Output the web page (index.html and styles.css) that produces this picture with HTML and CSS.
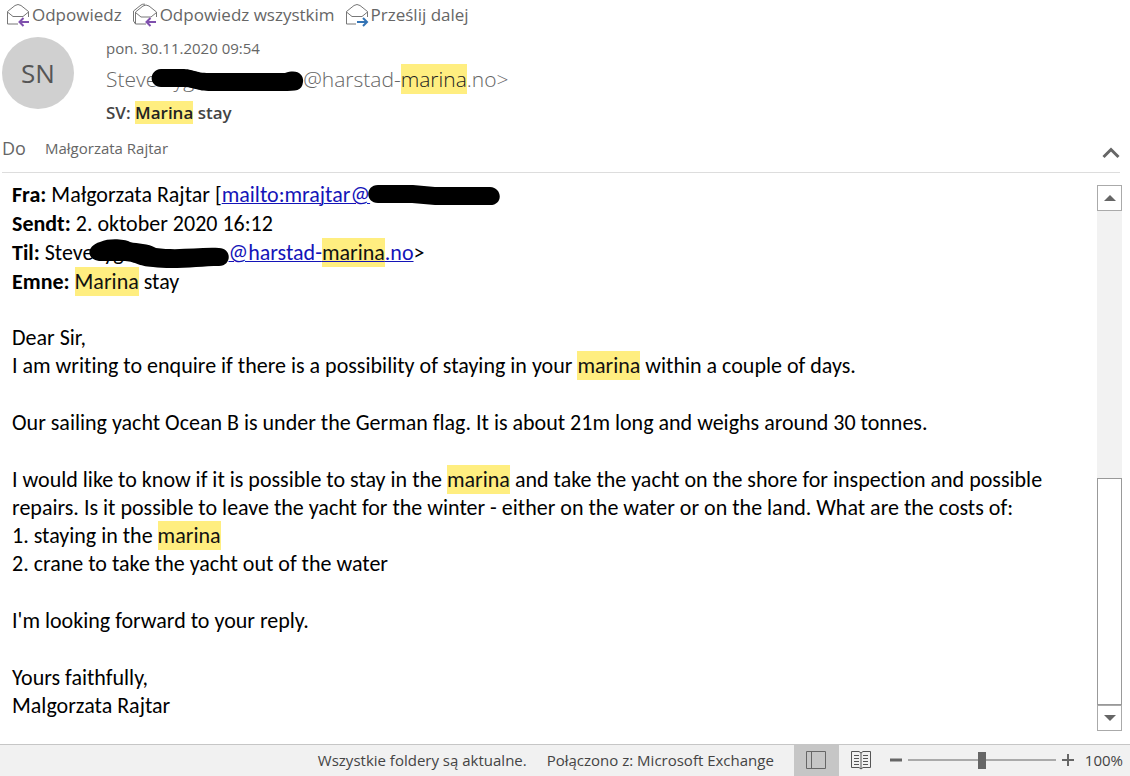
FILE: index.html
```html
<!DOCTYPE html>
<html lang="pl">
<head>
<meta charset="utf-8">
<title>SV: Marina stay</title>
<link rel="stylesheet" href="styles.css">
</head>
<body>
<main class="window">
  <nav class="actions">
    <button class="action" type="button">
      <svg class="envelope" width="24" height="24" viewBox="0 0 24 24" fill="none"><path class="outline" d="M12 21H1.500V8.500L9 2.500Q12 .5 15 2.500L22.500 8.500V14M1.500 9L7 13.500H17L22.500 9"/><path class="reply-arrow" d="M23 19H14M17.500 15L13.500 19L17.500 23"/></svg>Odpowiedz
    </button>
    <button class="action" type="button">
      <svg class="envelope" width="26" height="24" viewBox="0 0 26 24" fill="none"><path class="outline" d="M1.500 18V8L9 2Q10.500 .8 13 1.200M14 21H3.500V9L11 3Q14 1 17 3L24.500 9V14M3.500 9.500L9 14H19L24.500 9.500M1.500 18L3.500 21"/><path class="reply-arrow" d="M24 19H15M18.500 15L14.500 19L18.500 23"/></svg>Odpowiedz wszystkim
    </button>
    <button class="action" type="button">
      <svg class="envelope" width="24" height="24" viewBox="0 0 24 24" fill="none"><path class="outline" d="M11 21H1.500V8.500L9 2.500Q12 .5 15 2.500L22.500 8.500V14M1.500 9L7 13.500H17L22.500 9"/><path class="forward-arrow" d="M12 19H22M18 15L22 19L18 23"/></svg>Prześlij dalej
    </button>
  </nav>

  <header class="header">
    <div class="avatar">SN</div>
    <div class="meta">
      <time class="date">pon. 30.11.2020 09:54</time>
      <div class="sender">Steve<span class="redacted sender-gap">&nbsp;&nbsp;&nbsp;yg<svg class="ink" width="153" height="26" viewBox="0 0 153 26"><path d="M10 1H31C43 1 44 5 58 5H134C148 0 153 8 152 14C151 23 145 23 132 23H60C45 23 43 19 32 19H10C-2 19-3 2 10 1Z"/></svg></span>@harstad-<mark>marina</mark>.no&gt;</div>
      <h1 class="subject">SV: <mark>Marina</mark> stay</h1>
    </div>
  </header>

  <div class="recipients">
    <span class="to">Do</span><span class="name">Małgorzata Rajtar</span>
    <button class="collapse" type="button" aria-label="Zwiń"><svg width="18" height="12" viewBox="0 0 18 12" fill="none"><path d="M1.500 10L9 2.500L16.500 10" stroke="#666" stroke-width="3"/></svg></button>
  </div>

  <div class="reader">
    <article class="body">
      <div class="quoted">
        <div><b>Fra:</b> Małgorzata Rajtar [<a href="mailto:mrajtar@">mailto:mrajtar@</a><span class="redacted link-gap">&nbsp;<svg class="ink" width="132" height="22" viewBox="0 0 132 22"><path d="M10 1H45L67 3H122C135 4 135 21 122 21H67L44 19H10C-3 19-3 1 10 1Z"/></svg></span></div>
        <div><b>Sendt:</b> 2. oktober 2020 16:12</div>
        <div><b>Til:</b> Steve<span class="redacted til-gap">&nbsp;&nbsp;yg<svg class="ink" width="141" height="31" viewBox="0 0 141 31"><path d="M11 4C20 0 35 1 41 4C49 6 59 5 67 10C90 13 110 9 130 10C143 10 143 28 130 28C111 28 85 32 64 29C48 28 48 24 36 23H10C-3 21-3 8 11 4Z"/></svg></span><a href="mailto:@harstad-marina.no">@harstad-<mark>marina</mark>.no</a>&gt;</div>
        <div><b>Emne:</b> <mark>Marina</mark> stay</div>
      </div>
      <p>Dear Sir,<br>I am writing to enquire if there is a possibility of staying in your <mark>marina</mark> within a couple of days.</p>
      <p>Our sailing yacht Ocean B is under the German flag. It is about 21m long and weighs around 30 tonnes.</p>
      <p>I would like to know if it is possible to stay in the <mark>marina</mark> and take the yacht on the shore for inspection and possible<br>repairs. Is it possible to leave the yacht for the winter - either on the water or on the land. What are the costs of:<br>1. staying in the <mark>marina</mark><br>2. crane to take the yacht out of the water</p>
      <p>I'm looking forward to your reply.</p>
      <p>Yours faithfully,<br>Malgorzata Rajtar</p>
    </article>
    <div class="scrollbar">
      <button class="scroll-button" type="button" aria-label="W górę"><svg width="12" height="6" viewBox="0 0 12 6"><path d="M0 6L6 0L12 6Z" fill="#666"/></svg></button>
      <div class="track"><div class="thumb"></div></div>
      <button class="scroll-button" type="button" aria-label="W dół"><svg width="12" height="6" viewBox="0 0 12 6"><path d="M0 0L6 6L12 0Z" fill="#666"/></svg></button>
    </div>
  </div>

  <footer class="status">
    <span class="folders">Wszystkie foldery są aktualne.</span>
    <span class="connection">Połączono z: Microsoft Exchange</span>
    <button class="view selected" type="button" aria-label="Widok normalny"><svg width="20" height="20" viewBox="0 0 20 20" fill="none" stroke="#666"><path d="M.5 1.500H19.500V18.500H.5ZM5.500 1.500V18.500"/></svg></button>
    <button class="view" type="button" aria-label="Widok do czytania"><svg width="20" height="20" viewBox="0 0 20 20" fill="none" stroke="#555"><path d="M10 3L8 1.500H.5V17.500H8L10 19L12 17.500H19.500V1.500H12L10 3V19M3 5.500H8M3 8.500H8M3 11.500H8M3 14.500H8M12 5.500H17M12 8.500H17M12 11.500H17M12 14.500H17"/></svg></button>
    <div class="zoom">
      <button class="step" type="button" aria-label="Pomniejsz"><svg width="12" height="12" viewBox="0 0 12 12"><path d="M0 6H12" stroke="#666" stroke-width="3"/></svg></button>
      <input class="slider" type="range" min="0" max="200" value="100" aria-label="Powiększenie">
      <button class="step" type="button" aria-label="Powiększ"><svg width="12" height="12" viewBox="0 0 12 12"><path d="M0 6H12M6 0V12" stroke="#666" stroke-width="2"/></svg></button>
      <span class="percent">100%</span>
    </div>
  </footer>
</main>
</body>
</html>
```
FILE: styles.css
```css
* { box-sizing: border-box; }
body { margin: 0; background: #fff; font-family: "Open Sans", "Noto Sans", sans-serif; color: #666; }
button { border: 0; padding: 0; background: none; font: inherit; color: inherit; }
svg { display: block; flex: none; }
mark { background: #ffee80; color: #222; }
.window { display: flex; flex-direction: column; min-height: 100vh; }

.actions { display: flex; gap: 10px; height: 32px; padding: 2px 6px; }
.action { display: flex; align-items: center; gap: 2px; height: 26px; font-size: 17px; line-height: 26px; white-space: nowrap; }
.outline { stroke: #777; }
.reply-arrow { stroke: #7f50ad; stroke-width: 2; }
.forward-arrow { stroke: #3474b5; stroke-width: 2; }

.header { display: flex; gap: 32px; padding: 5px 2px 0; }
.avatar { display: grid; place-items: center; width: 72px; height: 72px; border-radius: 50%; background: #d0d0d0; color: #555; font-size: 26px; }
.meta { white-space: nowrap; }
.date { display: block; font-size: 15px; line-height: 22px; }
.sender { font-size: 21px; font-weight: 300; line-height: 40px; }
.sender mark { padding: 1px 0; }
.subject { margin: 0; font-size: 17px; font-weight: 600; line-height: 28px; color: #444; }
.redacted { display: inline-block; position: relative; white-space: nowrap; }
.ink { position: absolute; fill: #000; }
.sender-gap { width: 146px; }
.sender-gap .ink { left: -6px; top: 9px; }

.recipients { display: flex; align-items: center; height: 46px; margin: 0 10px 0 2px; padding-bottom: 4px; border-bottom: 1px solid #ddd; }
.to { width: 43px; font-size: 18px; }
.name { font-size: 15px; }
.collapse { margin: 10px 0 0 auto; }

.reader { display: flex; flex: 1; padding: 7px 8px 13px 12px; }
.body { flex: 1; font-family: Carlito, Calibri, Lato, sans-serif; font-size: 22px; line-height: 28px; font-variant-ligatures: none; color: #000; }
.body p { margin: 29px 0 0; }
.body .quoted + p { margin-top: 28px; }
.body mark { padding: 1px 0; color: #111; }
.quoted { line-height: 29px; }
.body a { color: #1414b8; text-decoration: underline; text-decoration-thickness: 1px; }
.link-gap { width: 132px; }
.link-gap .ink { left: -2px; top: 4px; }
.til-gap { width: 135px; }
.til-gap .ink { left: -5px; top: 0; }

.scrollbar { display: flex; flex-direction: column; width: 25px; margin-top: 5px; }
.scroll-button { display: grid; place-items: center; height: 26px; border: 1px solid #aaa; }
.track { display: flex; flex: 1; flex-direction: column; justify-content: flex-end; background: #f2f2f2; }
.thumb { height: 46%; border: 1px solid #999; background: #fff; }

.status { display: flex; align-items: center; justify-content: flex-end; height: 32px; padding-bottom: 1px; border-top: 1px solid #c6c6c6; background: #f1f1f1; font-size: 15px; color: #444; white-space: nowrap; }
.connection { margin: 0 20px; }
.view { display: grid; place-items: center; width: 45px; height: 32px; }
.selected { background: #c6c6c6; }
.zoom { display: flex; align-items: center; gap: 6px; padding: 0 7px 0 6px; }
.percent { margin-left: 5px; }
.slider { appearance: none; width: 148px; height: 18px; margin: 0; background: linear-gradient(#aaa, #aaa) center / 100% 2px no-repeat; }
.slider::-webkit-slider-thumb { appearance: none; width: 8px; height: 17px; background: #666; }
```
